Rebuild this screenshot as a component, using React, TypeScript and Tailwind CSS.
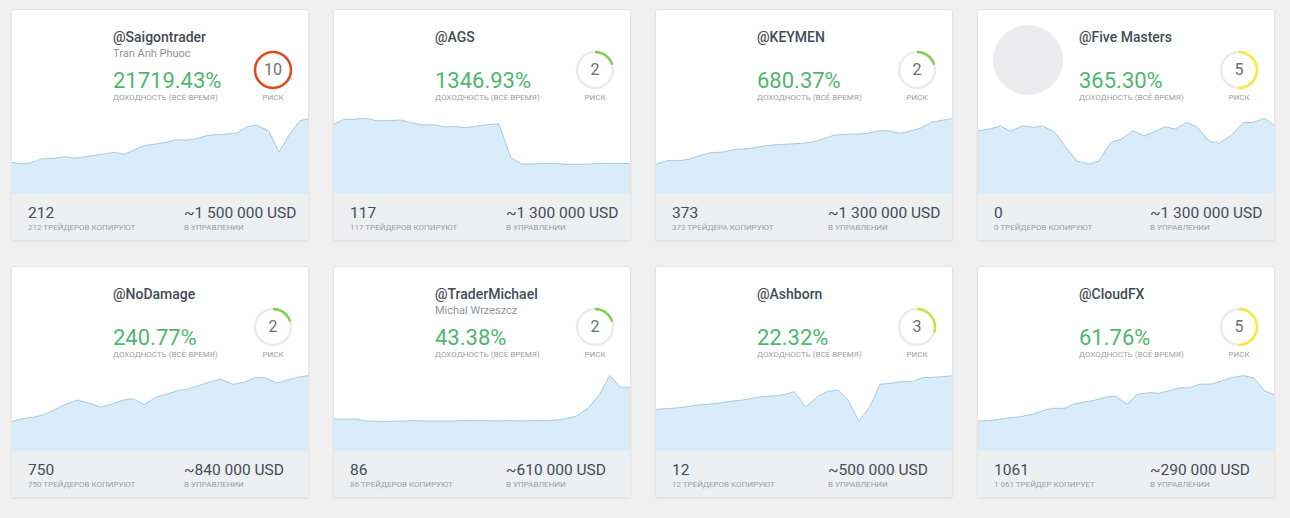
import React from "react";

type Trader = {
  handle: string;
  name?: string;
  avatar?: boolean;
  profit: string;
  risk: number;
  copiers: string;
  copiersLabel: string;
  aum: string;
  // chart points read off the reference: [x, y], x0..x1 span the card, y in 1/3 px
  pts: number[][];
  x0: number;
  x1: number;
  yOff: number;
};

const riskColors: Record<number, string> = {
  2: "#7fd04c",
  3: "#c9e23e",
  5: "#f1ec3a",
  10: "#df4a1e",
};

const traders: Trader[] = [
  {
    handle: "@Saigontrader",
    name: "Tran Anh Phuoc",
    profit: "21719.43%",
    risk: 10,
    copiers: "212",
    copiersLabel: "212 трейдеров копируют",
    aum: "~1 500 000 USD",
    x0: 17,
    x1: 757,
    yOff: 0,
    pts: [
      [17, 157], [40, 162], [65, 158], [92, 146], [120, 145], [148, 140], [172, 145], [200, 140],
      [225, 136], [250, 131], [272, 127], [296, 133], [320, 120], [348, 106], [375, 102], [400, 97],
      [425, 89], [450, 91], [475, 86], [500, 77], [525, 74], [550, 72], [575, 70], [600, 50],
      [625, 45], [655, 64], [680, 127], [705, 75], [732, 32], [757, 25],
    ],
  },
  {
    handle: "@AGS",
    profit: "1346.93%",
    risk: 2,
    copiers: "117",
    copiersLabel: "117 трейдеров копируют",
    aum: "~1 300 000 USD",
    x0: 820,
    x1: 1558,
    yOff: 0,
    pts: [
      [820, 42], [845, 28], [870, 28], [900, 25], [925, 32], [955, 32], [985, 30], [1010, 38],
      [1040, 45], [1065, 44], [1095, 51], [1120, 49], [1145, 53], [1170, 49], [1200, 44], [1228, 41],
      [1258, 143], [1285, 162], [1310, 162], [1340, 160], [1370, 161], [1400, 163], [1430, 163],
      [1455, 162], [1480, 160], [1510, 160], [1535, 160], [1558, 162],
    ],
  },
  {
    handle: "@KEYMEN",
    profit: "680.37%",
    risk: 2,
    copiers: "373",
    copiersLabel: "373 трейдера копируют",
    aum: "~1 300 000 USD",
    x0: 13,
    x1: 754,
    yOff: 0,
    pts: [
      [13, 163], [40, 152], [70, 152], [95, 148], [120, 137], [150, 128], [180, 126], [205, 119],
      [230, 117], [255, 114], [285, 107], [315, 104], [345, 102], [375, 100], [400, 97], [425, 88],
      [455, 76], [485, 73], [515, 72], [540, 70], [565, 63], [590, 62], [620, 70], [645, 63],
      [670, 55], [700, 36], [725, 31], [754, 25],
    ],
  },
  {
    handle: "@Five Masters",
    avatar: true,
    profit: "365.30%",
    risk: 5,
    copiers: "0",
    copiersLabel: "0 трейдеров копируют",
    aum: "~1 300 000 USD",
    x0: 814,
    x1: 1556,
    yOff: 0,
    pts: [
      [814, 62], [840, 58], [870, 48], [895, 64], [925, 47], [950, 52], [975, 48], [1005, 66],
      [1030, 107], [1060, 153], [1090, 162], [1115, 153], [1145, 97], [1170, 88], [1200, 62],
      [1228, 78], [1255, 64], [1280, 50], [1305, 57], [1335, 37], [1360, 52], [1390, 94],
      [1415, 99], [1445, 76], [1475, 38], [1500, 37], [1528, 25], [1556, 50],
    ],
  },
  {
    handle: "@NoDamage",
    profit: "240.77%",
    risk: 2,
    copiers: "750",
    copiersLabel: "750 трейдеров копируют",
    aum: "~840 000 USD",
    x0: 17,
    x1: 757,
    yOff: 6,
    pts: [
      [17, 170], [45, 160], [70, 157], [95, 150], [125, 133], [150, 118], [180, 105], [210, 115],
      [237, 126], [265, 117], [292, 106], [318, 101], [345, 119], [375, 96], [400, 88], [428, 77],
      [455, 72], [480, 62], [510, 50], [535, 42], [565, 58], [595, 52], [622, 37], [645, 38],
      [675, 54], [700, 45], [730, 36], [757, 31],
    ],
  },
  {
    handle: "@TraderMichael",
    name: "Michal Wrzeszcz",
    profit: "43.38%",
    risk: 2,
    copiers: "86",
    copiersLabel: "86 трейдеров копируют",
    aum: "~610 000 USD",
    x0: 820,
    x1: 1558,
    yOff: 6,
    pts: [
      [820, 162], [845, 162], [875, 162], [900, 168], [930, 169], [960, 169], [990, 168],
      [1020, 167], [1050, 168], [1080, 168], [1110, 168], [1140, 167], [1170, 167], [1200, 167],
      [1230, 168], [1260, 167], [1290, 168], [1320, 167], [1350, 167], [1380, 164], [1420, 154],
      [1450, 128], [1478, 88], [1503, 31], [1530, 68], [1558, 66],
    ],
  },
  {
    handle: "@Ashborn",
    profit: "22.32%",
    risk: 3,
    copiers: "12",
    copiersLabel: "12 трейдеров копируют",
    aum: "~500 000 USD",
    x0: 13,
    x1: 754,
    yOff: 6,
    pts: [
      [13, 133], [40, 131], [70, 128], [95, 124], [120, 120], [150, 117], [175, 113], [200, 109],
      [230, 105], [255, 99], [280, 95], [305, 93], [335, 88], [357, 80], [385, 126], [415, 94],
      [440, 79], [465, 75], [490, 105], [518, 169], [545, 125], [570, 58], [595, 55], [620, 50],
      [650, 50], [675, 38], [700, 37], [725, 35], [754, 32],
    ],
  },
  {
    handle: "@CloudFX",
    profit: "61.76%",
    risk: 5,
    copiers: "1061",
    copiersLabel: "1 061 трейдер копирует",
    aum: "~290 000 USD",
    x0: 814,
    x1: 1556,
    yOff: 6,
    pts: [
      [814, 168], [840, 167], [865, 163], [895, 158], [920, 155], [950, 148], [975, 137],
      [1000, 130], [1030, 130], [1050, 118], [1075, 112], [1100, 107], [1130, 97], [1155, 93],
      [1185, 118], [1210, 88], [1240, 83], [1265, 85], [1290, 77], [1315, 69], [1340, 68],
      [1365, 58], [1395, 57], [1420, 48], [1445, 38], [1475, 32], [1500, 38], [1528, 78],
      [1556, 91],
    ],
  },
];

const W = 298;
const H = 84;

function Chart({ t }: { t: Trader }) {
  const pts = t.pts.map(([x, y]) => [
    ((x - t.x0) / (t.x1 - t.x0)) * W,
    (y - t.yOff) / 3,
  ]);
  const line = pts.map(([x, y], i) => `${i ? "L" : "M"}${x.toFixed(1)} ${y.toFixed(1)}`).join(" ");
  const area = `${line} L${W} ${H} L0 ${H} Z`;
  return (
    <svg width={W} height={H} viewBox={`0 0 ${W} ${H}`} className="block">
      <path d={area} fill="#d9ecf9" />
      <path d={line} fill="none" stroke="#a8c9dd" strokeWidth="1" />
    </svg>
  );
}

function Risk({ value }: { value: number }) {
  const r = 18;
  const c = 2 * Math.PI * r;
  const len = (value / 10) * c;
  return (
    <div className="flex flex-col items-center w-[40px]">
      <div className="relative w-[40px] h-[40px]">
        <svg width="40" height="40" viewBox="0 0 40 40" className="absolute inset-0">
          <circle cx="20" cy="20" r={r} fill="none" stroke="#ebebeb" strokeWidth="2.5" />
          <circle
            cx="20"
            cy="20"
            r={r}
            fill="none"
            stroke={riskColors[value]}
            strokeWidth="2.5"
            strokeDasharray={`${len} ${c}`}
            transform="rotate(-90 20 20)"
          />
        </svg>
        <div className="absolute inset-0 flex items-center justify-center text-[16px] text-[#6b6f75]">
          {value}
        </div>
      </div>
      <div className="mt-[3px] text-[8px] leading-[10px] uppercase text-[#9a9fa6]">Риск</div>
    </div>
  );
}

function Card({ t }: { t: Trader }) {
  return (
    <div className="w-[298px] h-[232px] bg-white rounded-[3px] overflow-hidden border border-[#e3e3e3] shadow-[0_1px_2px_rgba(0,0,0,0.05)] flex flex-col">
      {/* Header */}
      <div className="h-[100px] flex pl-[15px] pr-[15px]">
        <div className="w-[70px] h-[70px] mt-[15px] rounded-full shrink-0">
          {t.avatar && <div className="w-full h-full rounded-full bg-[#ececee]" />}
        </div>
        <div className="ml-[16px] pt-[19px] flex-1">
          <div className="text-[14px] leading-[16px] font-medium text-[#454b55]">{t.handle}</div>
          <div className="mt-[2px] h-[14px] text-[11px] leading-[14px] text-[#8f959d]">{t.name}</div>
          <div className="mt-[9px] text-[22px] leading-[22px] text-[#4fb66f]">{t.profit}</div>
          <div className="mt-[1px] text-[8px] leading-[10px] uppercase text-[#9a9fa6]">
            Доходность (всё время)
          </div>
        </div>
        <div className="pt-[40px]">
          <Risk value={t.risk} />
        </div>
      </div>
      {/* Chart */}
      <Chart t={t} />
      {/* Footer */}
      <div className="flex-1 bg-[#eeeff1] flex pt-[10px]">
        <div className="w-[172px] pl-[16px]">
          <div className="text-[15.5px] leading-[18px] text-[#464c57]">{t.copiers}</div>
          <div className="mt-[1px] text-[8px] leading-[10px] uppercase text-[#9a9fa6]">{t.copiersLabel}</div>
        </div>
        <div>
          <div className="text-[15.5px] leading-[18px] text-[#464c57]">{t.aum}</div>
          <div className="mt-[1px] text-[8px] leading-[10px] uppercase text-[#9a9fa6]">В управлении</div>
        </div>
      </div>
    </div>
  );
}

export default function App() {
  return (
    <div
      className="w-[1290px] h-[518px] bg-[#f0f0f0] pl-[11px] pt-[9px]"
      style={{ fontFamily: "Roboto, 'Liberation Sans', sans-serif" }}
    >
      <div className="grid grid-cols-[repeat(4,298px)] gap-x-[24px] gap-y-[25px]">
        {traders.map((t) => (
          <Card key={t.handle} t={t} />
        ))}
      </div>
    </div>
  );
}
